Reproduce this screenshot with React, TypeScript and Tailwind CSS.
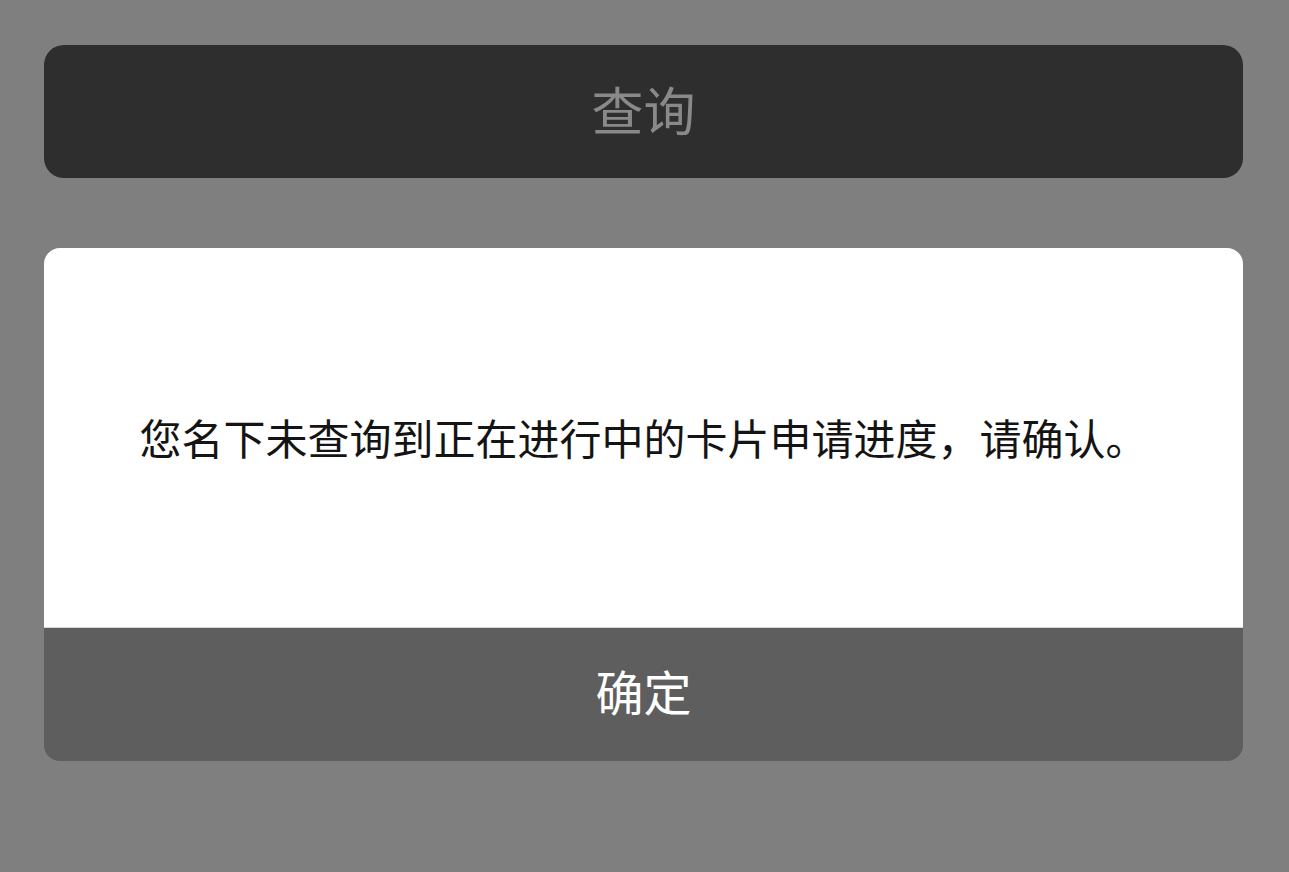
export default function App() {
  const font = { fontFamily: '"Noto Sans CJK SC", "Noto Sans", sans-serif' };
  return (
    <main
      className="w-[1289px] h-[872px] bg-[#7f7f7f] pt-[45px] pl-[44px] pr-[46px] overflow-hidden"
      style={font}
    >
      {/* Query button */}
      <div className="h-[133px] rounded-[20px] bg-[#2e2e2e] flex items-center justify-center">
        <span className="text-[52px] leading-none text-[#898989] pb-[5px]">查询</span>
      </div>

      {/* Dialog */}
      <section className="mt-[70px] rounded-[16px] overflow-hidden">
        <div className="h-[379px] bg-white flex items-center justify-center pb-[2px]">
          <p className="text-[42px] leading-none text-[#141414]">
            您名下未查询到正在进行中的卡片申请进度，请确认。
          </p>
        </div>
        <div className="h-px bg-[#d6d6d6]" />
        <div className="h-[133px] bg-[#5e5e5e] flex items-center justify-center pb-[10px]">
          <span className="text-[48px] leading-none text-white">确定</span>
        </div>
      </section>
    </main>
  );
}
